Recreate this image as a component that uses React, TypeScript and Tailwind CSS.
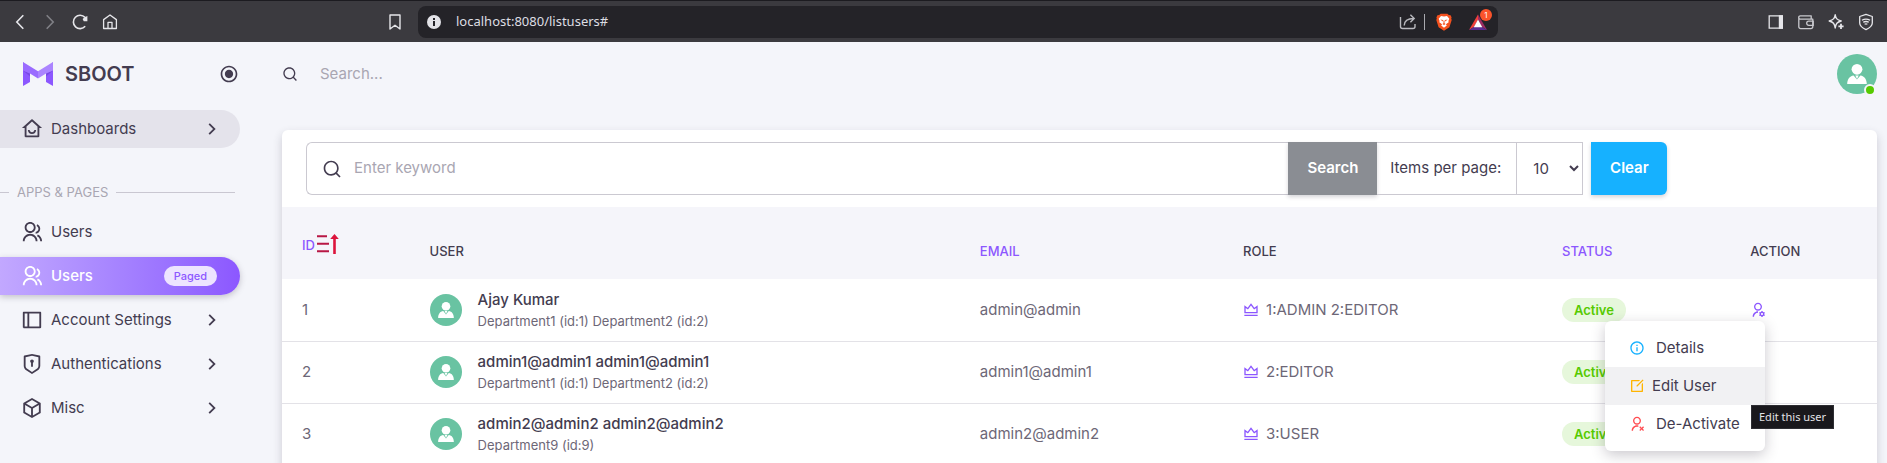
import React from "react";
import {
  RiArrowRightSLine,
  RiBox3Line,
  RiEditBoxLine,
  RiGroupLine,
  RiHomeSmileLine,
  RiInformationLine,
  RiLayoutLeftLine,
  RiRadioButtonLine,
  RiSearchLine,
  RiShieldKeyholeLine,
  RiUserSettingsLine,
  RiUserUnfollowLine,
  RiVipCrownLine,
} from "react-icons/ri";

type User = { id: number; name: string; departments: string; email: string; roles: string };

const users: User[] = [
  { id: 1, name: "Ajay Kumar", departments: "Department1 (id:1) Department2 (id:2)", email: "admin@admin", roles: "1:ADMIN 2:EDITOR" },
  { id: 2, name: "admin1@admin1 admin1@admin1", departments: "Department1 (id:1) Department2 (id:2)", email: "admin1@admin1", roles: "2:EDITOR" },
  { id: 3, name: "admin2@admin2 admin2@admin2", departments: "Department9 (id:9)", email: "admin2@admin2", roles: "3:USER" },
];

function BrowserBar() {
  return (
    <div className="flex h-[42px] shrink-0 items-center border-t border-[#1c1b20] bg-[#3b3a3f] text-[#e6e6ea]">
      <div className="flex w-[418px] shrink-0 items-center justify-between pr-[13px] pl-[10px]">
        <div className="flex items-center gap-[10px]">
          <button aria-label="Back" className="size-5">
            <svg viewBox="0 0 20 20" fill="none" stroke="currentColor" strokeWidth="1.6"><path d="M13.3 3.2 6.8 10l6.5 6.8" /></svg>
          </button>
          <button aria-label="Forward" className="size-5 text-[#808086]">
            <svg viewBox="0 0 20 20" fill="none" stroke="currentColor" strokeWidth="1.6"><path d="M6.7 3.2 13.2 10l-6.5 6.8" /></svg>
          </button>
          <button aria-label="Reload" className="size-5">
            <svg viewBox="0 0 20 20" fill="none" stroke="currentColor" strokeWidth="1.6">
              <path d="M15.2 14.3A6.7 6.7 0 1 1 15 5.4" />
              <path d="M17.4 4v5.2h-3.6L12.6 7l2-1.8z" fill="currentColor" stroke="none" />
            </svg>
          </button>
          <button aria-label="Home" className="size-5">
            <svg viewBox="0 0 20 20" fill="none" stroke="currentColor" strokeWidth="1.3" strokeLinejoin="round">
              <path d="M3.6 7.6 10 3l6.4 4.6v8.9H3.6z" />
              <path d="M8 16.5v-6.2h4v6.200" />
            </svg>
          </button>
        </div>
        <button aria-label="Bookmark" className="size-5">
          <svg viewBox="0 0 20 20" fill="none" stroke="currentColor" strokeWidth="1.4" strokeLinejoin="round"><path d="M5 3h10v14l-5-3.8L5 17z" /></svg>
        </button>
      </div>
      <div className="flex h-8 min-w-0 flex-1 items-center rounded-lg bg-[#242328] pr-[11px] pl-2">
        <svg viewBox="0 0 16 16" className="size-4 shrink-0" aria-hidden="true">
          <circle cx="8" cy="8" r="7" fill="#e3e3e8" />
          <path d="M7 7h2v5H7zM7 4h2v2H7z" fill="#242328" />
        </svg>
        <input
          aria-label="Address"
          defaultValue="localhost:8080/listusers#"
          className="ml-[14px] min-w-0 flex-1 bg-transparent font-['Noto_Sans',sans-serif] text-[13px] text-[#dedee3] outline-none"
        />
        <button aria-label="Share" className="size-5 shrink-0 text-[#b9b9be]">
          <svg viewBox="0 0 20 20" fill="none" stroke="currentColor" strokeWidth="1.4">
            <path d="M2.500 5v9.500a2 2 0 0 0 2 2h10.500a2 2 0 0 0 2-2V12" />
            <path d="M6.200 13.500c.2-5 3-7 9.500-7M12.400 2.800l3.800 3.700-3.800 3.800" />
          </svg>
        </button>
        <span className="mx-[6px] h-4 w-px shrink-0 bg-[#a9a9ae]" />
        <button aria-label="Shields" className="ml-1 size-[18px] shrink-0">
          <svg viewBox="0 0 18 18">
            <path d="M5.6.8h6.8l1.4 1.3 1.8.2 1 2.2-.4 1 .5 1.6-2.3 7.1L9 17.8l-5.4-3.6L1.3 7.1l.5-1.6-.4-1 1-2.2 1.8-.2z" fill="#f4511e" />
            <path d="m9 3.6 3-.5 2.3 2.6-.9 2.2.3 1.3-2.8 2 .9 1.4L9 14.8l-2.800-2.200.9-1.400-2.800-2 .3-1.300-.9-2.200L6 3.100z" fill="#fff" />
            <path d="M5.400 6.400 8 7l-.3 1.600zM12.600 6.400 10 7l.3 1.600zM8.500 7.500h1v2.800l1.200.7L9 12l-1.700-1 1.200-.7z" fill="#f4511e" />
          </svg>
        </button>
        <button aria-label="Rewards" className="relative ml-4 size-[18px] shrink-0">
          <svg viewBox="0 0 18 18">
            <path d="M9 1.500 0 17l4.800-3L9 7z" fill="#f0413a" />
            <path d="M9 1.500 18 17l-4.800-3L9 7z" fill="#9e2b63" />
            <path d="M0 17h18l-4.800-3H4.800z" fill="#5b2d91" />
            <path d="m9 6.600 4.300 7.600H4.700z" fill="#fff" />
          </svg>
          <span className="absolute -top-1 left-[11px] flex size-3 items-center justify-center rounded-full bg-[#fb542b] text-[8px] leading-none text-white">1</span>
        </button>
      </div>
      <div className="flex w-[389px] shrink-0 items-center justify-end gap-[10px] pr-[11px]">
        <button aria-label="Sidebar" className="size-5">
          <svg viewBox="0 0 20 20"><path d="M3.200 3.800h13v12.400h-13z" fill="none" stroke="currentColor" strokeWidth="1.300" /><path d="M12.800 3.200h4.200v13.600h-4.200z" fill="currentColor" /></svg>
        </button>
        <button aria-label="Wallet" className="size-5 text-[#c9c9ce]">
          <svg viewBox="0 0 20 20" fill="none" stroke="currentColor" strokeWidth="1.300" strokeLinejoin="round">
            <path d="M2.800 5.200v9.600a1.800 1.800 0 0 0 1.800 1.800H15a1.800 1.800 0 0 0 1.800-1.800V7.200H4.400a1.600 1.600 0 0 1 0-3.400h10.800v3.200" />
            <path d="M17.200 9.200h-4.400a2 2 0 0 0 0 4.200h4.400z" />
          </svg>
        </button>
        <button aria-label="Assistant" className="size-5">
          <svg viewBox="0 0 20 20" fill="none" stroke="currentColor" strokeWidth="1.400" strokeLinejoin="round">
            <path d="M9.200 2.800c.7 3.800 1.800 5 6 6.200-4.200 1.200-5.300 2.600-6 7-.7-4.400-1.800-5.800-6-7 4.200-1.200 5.300-2.400 6-6.200z" />
            <path d="M15 11.800v5.200M12.400 14.400h5.200" strokeWidth="1.800" />
          </svg>
        </button>
        <button aria-label="VPN" className="size-5">
          <svg viewBox="0 0 20 20" fill="none" stroke="currentColor" strokeWidth="1.300" strokeLinejoin="round">
            <path d="m10 2.300 6.300 2.200v6.500c0 3-2.800 5-6.300 6.700C6.500 16 3.700 14 3.700 11V4.500z" />
            <path d="M5.900 8.300c2.600-1.600 5.600-1.600 8.200 0M7.200 10.300c1.800-1 3.800-1 5.600 0M8.600 12.300c.9-.5 1.900-.5 2.800 0" />
          </svg>
        </button>
      </div>
    </div>
  );
}

function Logo() {
  return (
    <svg viewBox="0 0 30 24" className="h-6 w-[30px]" aria-hidden="true">
      <path d="M0 0v24l7-4V11z" fill="#8c57ff" />
      <path d="M30 0v24l-7-4V11z" fill="#8c57ff" />
      <path d="M0 8.500 7 11.500v3z" fill="#6a3fd0" fillOpacity=".6" />
      <path d="M30 8.500 23 11.500v3z" fill="#6a3fd0" fillOpacity=".6" />
      <path d="M0 0v8.500l7 3 8 5V9.300z" fill="#9a6bff" />
      <path d="M30 0v8.500l-7 3-8 5V9.300z" fill="#ab84ff" />
    </svg>
  );
}

function Avatar({ className }: { className: string }) {
  return (
    <svg viewBox="0 0 40 40" className={className} role="img" aria-label="User avatar">
      <circle cx="20" cy="20" r="20" fill="#69c3a2" />
      <circle cx="20" cy="15.300" r="5.400" fill="#fff" />
      <path d="M10.200 30c0-4.500 2.300-8.200 6.400-8.600L20 25.500l3.400-4.100c4.100.4 6.400 4.100 6.400 8.600z" fill="#fff" />
      <path d="M18.300 21.400h3.400L20 25z" fill="#fff" />
    </svg>
  );
}

function MenuLink({
  icon,
  label,
  arrow,
  highlighted,
}: {
  icon: React.ReactNode;
  label: string;
  arrow?: boolean;
  highlighted?: boolean;
}) {
  return (
    <a
      href="#"
      className={`flex h-[38px] items-center gap-2 rounded-r-full pr-[17px] pl-[21px] text-[15px] text-[#433c50] ${highlighted ? "bg-[#e4e3eb]" : ""}`}
    >
      {icon}
      <span className="flex-1">{label}</span>
      {arrow && <RiArrowRightSLine className="size-[22px]" />}
    </a>
  );
}

function Sidebar() {
  return (
    <aside className="w-[260px] shrink-0 pr-5">
      <div className="flex h-16 items-center pl-[23px]">
        <Logo />
        <span className="ml-3 flex-1 text-xl font-semibold text-[#433c50]">SBOOT</span>
        <button aria-label="Pin menu" className="mr-[1px] text-[#433c50]">
          <RiRadioButtonLine className="size-5" />
        </button>
      </div>
      <nav className="pt-1">
        <MenuLink icon={<RiHomeSmileLine className="size-[22px]" />} label="Dashboards" arrow highlighted />
        <div className="mt-[34px] mb-[10px] flex h-[21px] items-center gap-2 pr-[5px] text-[13px] text-[#a9a6b2]">
          <span className="h-px w-[9px] bg-[#c9c7d1]" />
          <span>APPS &amp; PAGES</span>
          <span className="h-px flex-1 bg-[#c9c7d1]" />
        </div>
        <div className="flex flex-col gap-[6px]">
          <MenuLink icon={<RiGroupLine className="size-[22px]" />} label="Users" />
          <a
            href="#"
            className="flex h-[38px] items-center gap-2 rounded-r-full bg-linear-to-r from-[#c2a8ff] to-[#8c57ff] pr-[23px] pl-[21px] text-[15px] font-medium text-white shadow-[0_2px_6px_rgba(46,38,61,0.25)]"
          >
            <RiGroupLine className="size-[22px]" />
            <span className="flex-1">Users</span>
            <span className="rounded-full bg-[#ede4ff] px-[10px] text-[11px] leading-5 text-[#8c57ff]">Paged</span>
          </a>
          <MenuLink icon={<RiLayoutLeftLine className="size-[22px]" />} label="Account Settings" arrow />
          <MenuLink icon={<RiShieldKeyholeLine className="size-[22px]" />} label="Authentications" arrow />
          <MenuLink icon={<RiBox3Line className="size-[22px]" />} label="Misc" arrow />
        </div>
      </nav>
    </aside>
  );
}

function TopBar() {
  return (
    <header className="flex h-16 items-center">
      <RiSearchLine className="size-4 text-[#433c50]" />
      <input
        type="search"
        aria-label="Search"
        placeholder="Search..."
        className="ml-[22px] min-w-0 flex-1 bg-transparent text-[15px] outline-none placeholder:text-[#a9a6b2]"
      />
      <button aria-label="Account" className="relative size-10">
        <Avatar className="size-10" />
        <span className="absolute right-[1px] -bottom-[2px] size-3 rounded-full border-2 border-[#f4f5fa] bg-[#56ca00]" />
      </button>
    </header>
  );
}

function FilterForm() {
  return (
    <form className="flex h-[77px] items-center px-6">
      <div className="flex h-[53px] w-[88%] text-[15px] text-[#433c50]">
        <label className="flex min-w-0 flex-1 items-center rounded-l-md border border-r-0 border-[#cbc9d1] pl-[15px]">
          <RiSearchLine className="size-5 shrink-0" />
          <input
            aria-label="Keyword"
            placeholder="Enter keyword"
            className="ml-3 min-w-0 flex-1 bg-transparent outline-none placeholder:text-[#a9a6b2]"
          />
        </label>
        <button type="button" className="w-[89px] bg-[#8a8d93] font-semibold text-white shadow-[0_2px_4px_rgba(46,38,61,0.2)]">
          Search
        </button>
        <label htmlFor="page-size" className="flex w-[139px] items-center border-y border-[#cbc9d1] pl-[13px]">
          Items per page:
        </label>
        <select id="page-size" defaultValue="10" className="w-[67px] border border-[#cbc9d1] bg-white pl-3 text-[15px] outline-none">
          <option>10</option>
          <option>20</option>
          <option>50</option>
        </select>
        <button type="button" className="ml-2 w-[76px] rounded-r-md bg-[#16b1ff] font-semibold text-white shadow-[0_2px_4px_rgba(46,38,61,0.2)]">
          Clear
        </button>
      </div>
    </form>
  );
}

function SortAscIcon() {
  return (
    <svg viewBox="0 0 24 20" className="h-5 w-6" aria-hidden="true">
      <path d="M2 1.200h10v2h-10zM2 8.700h12v2h-12zM2 16.200h12v2h-12z" fill="#b81744" />
      <path d="M19.500 0l4.300 5h-3v18.200h-2.600V5h-3z" fill="#dc143c" />
    </svg>
  );
}

function ActionMenu() {
  return (
    <div className="absolute top-[42px] right-[112px] z-10 w-40 rounded-md bg-white py-2 text-[15px] text-[#433c50] shadow-[0_4px_14px_rgba(46,38,61,0.25)]">
      <a href="#" className="flex h-[38px] items-center gap-[11px] pl-6">
        <RiInformationLine className="size-4 text-[#16b1ff]" />
        Details
      </a>
      <a href="#" className="flex h-[38px] items-center gap-[7px] bg-[#f1f1f3] pl-6">
        <RiEditBoxLine className="size-4 text-[#ffb400]" />
        Edit User
      </a>
      <a href="#" className="flex h-[38px] items-center gap-[11px] pl-6">
        <RiUserUnfollowLine className="size-4 text-[#ff4c51]" />
        De-Activate
      </a>
      <div
        role="tooltip"
        className="absolute top-[84px] left-[146px] border border-[#2e2e33] bg-[#19181c] px-[7px] font-['Noto_Sans',sans-serif] text-[11px] leading-[22px] whitespace-nowrap text-[#e3e3e6]"
      >
        Edit this user
      </div>
    </div>
  );
}

function UserTable() {
  return (
    <table className="w-full table-fixed border-collapse text-left">
      <colgroup>
        <col className="w-[8%]" />
        <col className="w-[34.5%]" />
        <col className="w-[16.5%]" />
        <col className="w-[20%]" />
        <col className="w-[11.8%]" />
        <col className="w-[9.2%]" />
      </colgroup>
      <thead className="bg-[#f5f5fa] text-[13px] text-[#433c50]">
        <tr className="h-[72px] [&>th]:px-5 [&>th]:pt-[18px] [&>th]:font-medium">
          <th className="pb-3">
            <a href="#" className="flex h-6 items-center text-[#8c57ff]">
              ID
              <span className="self-start">
                <SortAscIcon />
              </span>
            </a>
          </th>
          <th>USER</th>
          <th><a href="#" className="text-[#8c57ff]">EMAIL</a></th>
          <th>ROLE</th>
          <th><a href="#" className="text-[#8c57ff]">STATUS</a></th>
          <th>ACTION</th>
        </tr>
      </thead>
      <tbody className="text-[15px] text-[#6d6777]">
        {users.map((user) => (
          <tr key={user.id} className="h-[62px] border-b border-[#e3e2e7] [&>td]:px-5">
            <td>{user.id}</td>
            <td>
              <div className="flex items-center gap-4">
                <Avatar className="size-8 shrink-0" />
                <div>
                  <div className="leading-[22px] font-medium text-[#433c50]">{user.name}</div>
                  <div className="text-[13px] leading-5">{user.departments}</div>
                </div>
              </div>
            </td>
            <td>{user.email}</td>
            <td>
              <div className="flex items-center gap-[7px]">
                <RiVipCrownLine className="size-4 text-[#8c57ff]" />
                {user.roles}
              </div>
            </td>
            <td>
              <span className="inline-block rounded-full bg-[#e6f7db] px-3 text-[13px] leading-6 font-semibold text-[#56ca00]">Active</span>
            </td>
            <td className="relative">
              <button aria-label={`Actions for ${user.name}`} className="block text-[#8c57ff]">
                <RiUserSettingsLine className="size-4" />
              </button>
              {user.id === 1 && <ActionMenu />}
            </td>
          </tr>
        ))}
      </tbody>
    </table>
  );
}

export default function App() {
  return (
    <div className="flex h-screen flex-col overflow-hidden bg-[#f4f5fa] font-['Inter',sans-serif]">
      <BrowserBar />
      <div className="flex min-h-0 flex-1">
        <Sidebar />
        <main className="min-w-0 flex-1 pr-[10px] pl-[22px]">
          <TopBar />
          <section className="mt-6 h-full rounded-md bg-white shadow-[0_4px_10px_rgba(46,38,61,0.2)]">
            <FilterForm />
            <UserTable />
          </section>
        </main>
      </div>
    </div>
  );
}
